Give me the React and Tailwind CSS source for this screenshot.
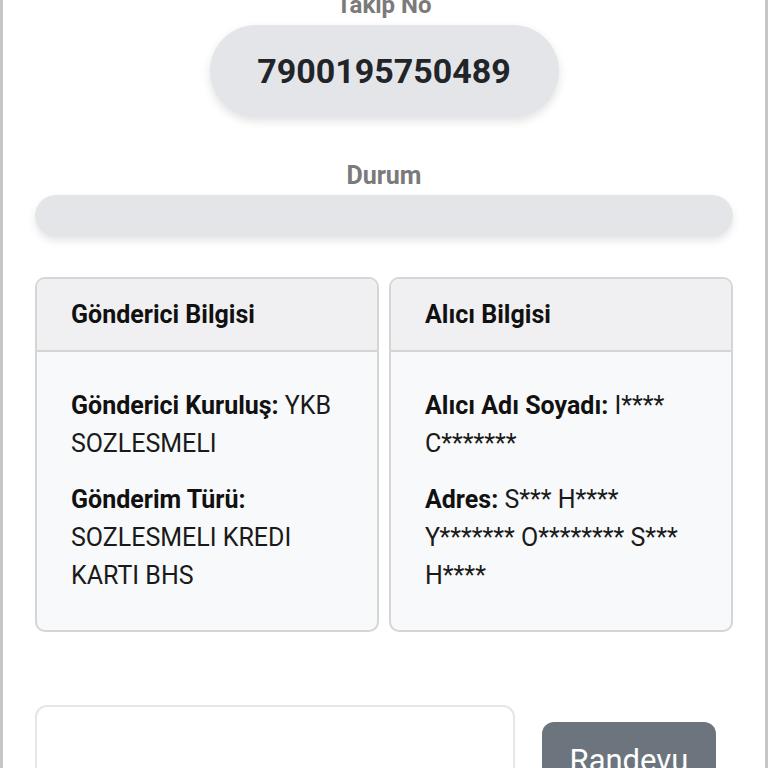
export default function App() {
  const sender = [
    { label: "Gönderici Kuruluş:", value: "YKB SOZLESMELI" },
    { label: "Gönderim Türü:", value: "SOZLESMELI KREDI KARTI BHS" },
  ];
  const receiver = [
    { label: "Alıcı Adı Soyadı:", value: "I**** C*******" },
    { label: "Adres:", value: "S*** H**** Y******* O******** S*** H****" },
  ];

  return (
    <div className="h-[768px] overflow-hidden bg-white font-['Roboto',sans-serif] text-[#212529]">
      <div className="min-h-full border-x-[3px] border-[#c6c6c6] px-8">
        {/* Takip No */}
        <div className="-mt-[9px] flex flex-col items-center">
          <p className="text-[24px] font-bold leading-[28px] text-[#7a7a7a]">Takip No</p>
          <div className="mt-[6px] flex h-[92px] w-[349px] items-center justify-center rounded-full bg-[#e4e5e8] shadow-[0_4px_10px_rgba(0,0,0,0.12)]">
            <span className="text-[34px] font-bold leading-[40px] text-[#212529]">7900195750489</span>
          </div>
        </div>

        {/* Durum */}
        <div className="mt-[45px] flex flex-col items-center">
          <p className="text-[25px] font-bold leading-[28px] text-[#7a7a7a]">Durum</p>
          <div className="mt-[5px] h-[42px] w-full rounded-full bg-[#e4e5e8] shadow-[0_4px_8px_rgba(0,0,0,0.10)]"></div>
        </div>

        {/* Cards */}
        <div className="mt-[40px] grid grid-cols-2 gap-[10px]">
          <InfoCard title="Gönderici Bilgisi" rows={sender} />
          <InfoCard title="Alıcı Bilgisi" rows={receiver} />
        </div>

        {/* Bottom */}
        <div className="mt-[73px] flex items-start">
          <div className="h-[100px] w-[480px] rounded-xl border-2 border-[#e6e6e6] bg-white"></div>
          <button className="ml-[27px] mt-[17px] flex h-[90px] w-[174px] items-start justify-center rounded-xl bg-[#6c757d] pt-[21px] text-[31px] leading-[36px] text-white">
            Randevu
          </button>
        </div>
      </div>
    </div>
  );
}

function InfoCard({ title, rows }) {
  return (
    <div className="overflow-hidden rounded-[10px] border-2 border-[#d5d5d5] bg-[#f8f9fa]">
      <div className="flex h-[73px] items-center border-b-2 border-[#d5d5d5] bg-[#f0f0f2] px-[34px]">
        <h3 className="text-[25px] font-bold leading-[28px] text-[#111]">{title}</h3>
      </div>
      <div className="flex flex-col gap-[18px] px-[34px] pt-[35px] pb-[35px] text-[25px] leading-[38px] text-[#1a1a1a]">
        {rows.map((r) => (
          <p key={r.label}>
            <span className="font-bold text-[#111]">{r.label}</span> {r.value}
          </p>
        ))}
      </div>
    </div>
  );
}
